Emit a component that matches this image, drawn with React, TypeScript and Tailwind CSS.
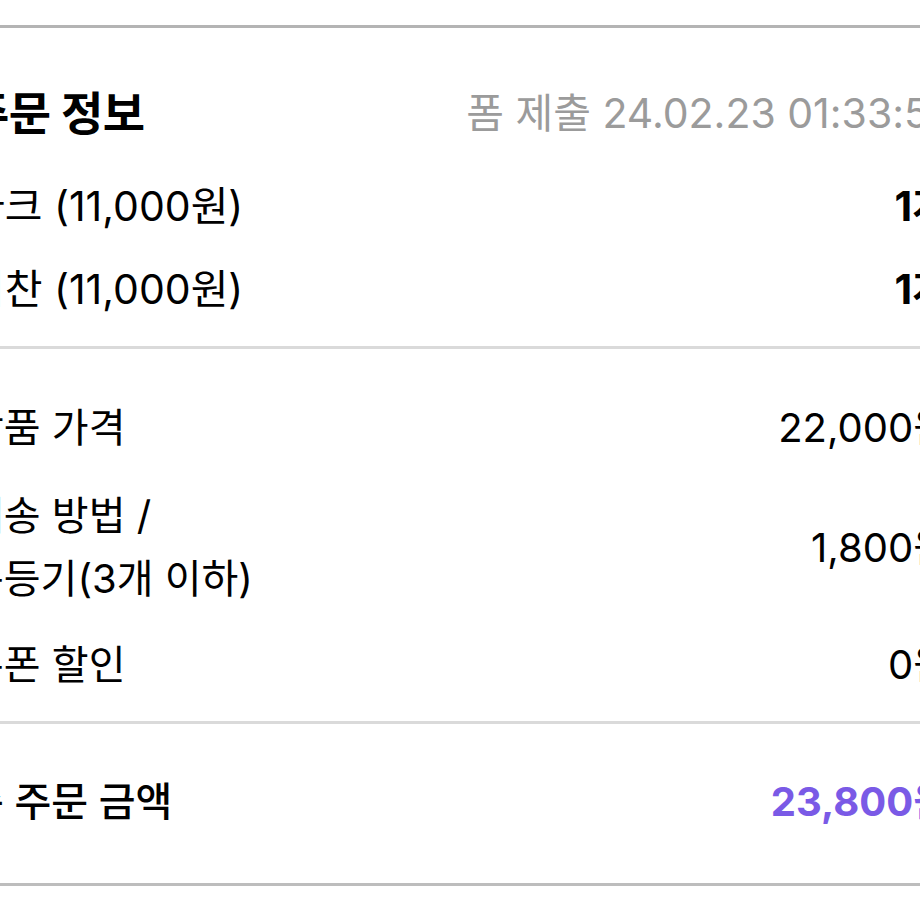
import React from "react";

const FONT = { fontFamily: '"Inter", "Noto Sans CJK KR", sans-serif' };

export default function App() {
  return (
    <div className="w-[920px] h-[920px] overflow-hidden bg-white text-black" style={FONT}>
      <div className="h-[25px]" />
      <div className="h-[3px] bg-[#b4b4b4]" />
      <div className="ml-[-33px] mr-[-30px]">
        {/* Section 1 */}
        <div className="pt-[55px] pb-[27px] flex flex-col">
          <div className="flex justify-between items-center leading-[60px] mb-[33px]">
            <span className="text-[46px] font-bold tracking-[-0.5px]">주문 정보</span>
            <span className="text-[41px] text-[#9b9b9b] mr-[-4px]">폼 제출 24.02.23 01:33:52</span>
          </div>
          <div className="flex flex-col gap-[23px]">
            <div className="flex justify-between items-center leading-[60px] text-[41px]">
              <span>다크 (11,000원)</span>
              <span className="font-bold">1개</span>
            </div>
            <div className="flex justify-between items-center leading-[60px] text-[41px]">
              <span>이찬 (11,000원)</span>
              <span className="font-bold">1개</span>
            </div>
          </div>
        </div>
      </div>
      <div className="h-[3px] bg-[#dadada]" />
      <div className="ml-[-33px] mr-[-30px]">
        {/* Section 2 */}
        <div className="pt-[49px] pb-[26px] flex flex-col text-[40px]">
          <div className="flex justify-between items-center leading-[60px]">
            <span>상품 가격</span>
            <span>22,000원</span>
          </div>
          <div className="flex justify-between items-center leading-[63px] mt-[26px]">
            <span>
              배송 방법 /
              <br />
              준등기(3개 이하)
            </span>
            <span>1,800원</span>
          </div>
          <div className="flex justify-between items-center leading-[60px] mt-[25px]">
            <span>쿠폰 할인</span>
            <span>0원</span>
          </div>
        </div>
      </div>
      <div className="h-[3px] bg-[#dadada]" />
      <div className="ml-[-33px] mr-[-30px]">
        {/* Section 3 */}
        <div className="pt-[48px] pb-[51px] flex flex-col text-[40px]">
          <div className="flex justify-between items-center leading-[60px]">
            <span className="font-medium">총 주문 금액</span>
            <span className="font-bold text-[#7a5ae6]">23,800원</span>
          </div>
        </div>
      </div>
      <div className="h-[3px] bg-[#bdbdbd]" />
    </div>
  );
}
